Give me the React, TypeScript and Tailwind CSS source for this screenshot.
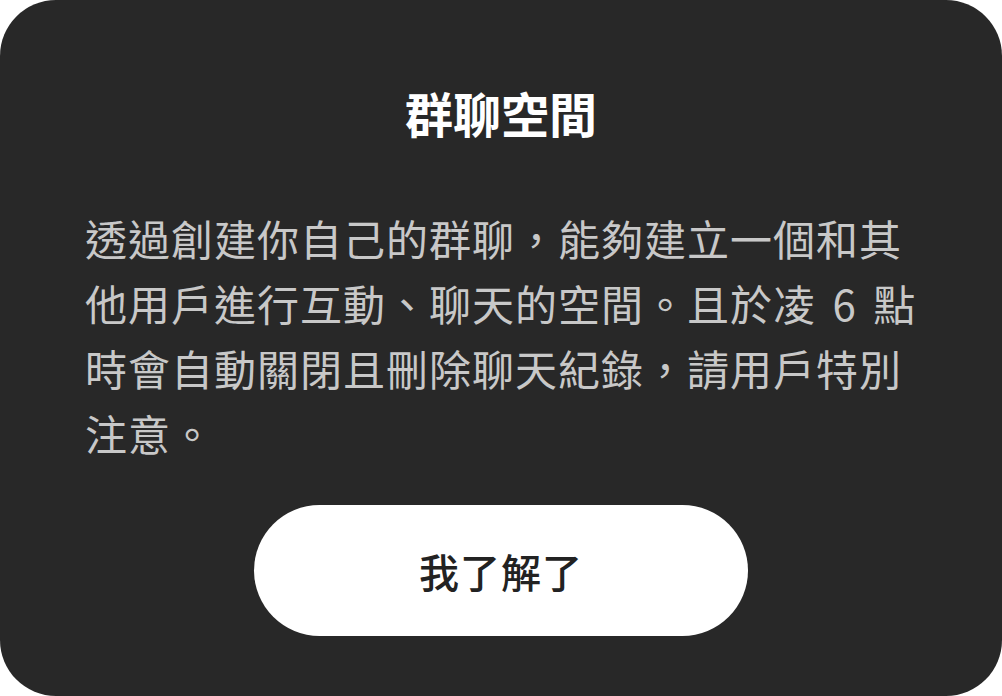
export default function App() {
  return (
    <div
      className="w-[1002px] h-[696px] bg-[#282828] rounded-[56px] flex flex-col items-center pt-[82px]"
      style={{ fontFamily: '"Noto Sans CJK TC", "Noto Sans", sans-serif' }}
    >
      <h1 className="text-[48px] leading-[60px] font-bold text-white">
        群聊空間
      </h1>

      <p className="mt-[63px] w-full px-[85px] text-[42px] leading-[65px] tracking-[1px] text-[#c8c8c8] [word-spacing:6px]">
        透過創建你自己的群聊，能夠建立一個和其他用戶進行互動、聊天的空間。且於凌 6 點時會自動關閉且刪除聊天紀錄，請用戶特別注意。
      </p>

      <button
        type="button"
        className="mt-[40px] w-[494px] h-[131px] rounded-full bg-white text-[40px] tracking-[1px] font-medium text-[#222222]"
      >
        我了解了
      </button>
    </div>
  );
}
